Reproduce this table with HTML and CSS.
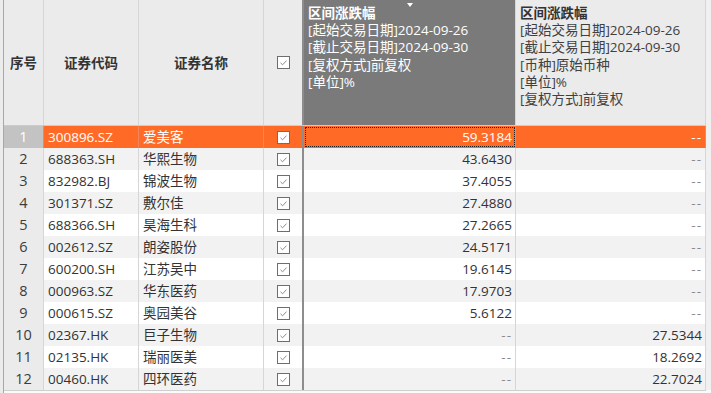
FILE: index.html
```html
<!DOCTYPE html>
<html lang="zh-CN">
<head>
<meta charset="utf-8">
<title>区间涨跌幅</title>
<link rel="stylesheet" href="styles.css">
</head>
<body>
<div class="sheet">
  <div class="gutter"></div>
  <div class="grid">
    <div class="row head">
      <div class="c h serial">序号</div>
      <div class="c h">证券代码</div>
      <div class="c h">证券名称</div>
      <div class="c h chk"><svg class="box" width="13" height="13" viewBox="0 0 13 13"><rect x="0.5" y="0.5" width="12" height="12" fill="#fff" stroke="#6e6e6e"/><path d="M3.5 6.8 L5.6 8.8 L9.5 4.6" fill="none" stroke="#8a8a8a" stroke-width="1"/></svg></div>
      <div class="c hd dark"><span class="sort"></span><b>区间涨跌幅</b><br>[起始交易日期]2024-09-26<br>[截止交易日期]2024-09-30<br>[复权方式]前复权<br>[单位]%</div>
      <div class="c hd"><b>区间涨跌幅</b><br>[起始交易日期]2024-09-26<br>[截止交易日期]2024-09-30<br>[币种]原始币种<br>[单位]%<br>[复权方式]前复权</div>
    </div>

    <div class="row sel">
      <div class="c serial">1</div><div class="c t">300896.SZ</div><div class="c t">爱美客</div>
      <div class="c chk"><svg class="box" width="13" height="13" viewBox="0 0 13 13"><rect x="0.5" y="0.5" width="12" height="12" fill="#fff" stroke="#6e6e6e"/><path d="M3.5 6.8 L5.6 8.8 L9.5 4.6" fill="none" stroke="#8a8a8a" stroke-width="1"/></svg></div>
      <div class="c n focus">59.3184</div><div class="c n na">--</div>
    </div>
    <div class="row alt">
      <div class="c serial">2</div><div class="c t">688363.SH</div><div class="c t">华熙生物</div>
      <div class="c chk"><svg class="box" width="13" height="13" viewBox="0 0 13 13"><rect x="0.5" y="0.5" width="12" height="12" fill="#fff" stroke="#6e6e6e"/><path d="M3.5 6.8 L5.6 8.8 L9.5 4.6" fill="none" stroke="#8a8a8a" stroke-width="1"/></svg></div>
      <div class="c n">43.6430</div><div class="c n na">--</div>
    </div>
    <div class="row">
      <div class="c serial">3</div><div class="c t">832982.BJ</div><div class="c t">锦波生物</div>
      <div class="c chk"><svg class="box" width="13" height="13" viewBox="0 0 13 13"><rect x="0.5" y="0.5" width="12" height="12" fill="#fff" stroke="#6e6e6e"/><path d="M3.5 6.8 L5.6 8.8 L9.5 4.6" fill="none" stroke="#8a8a8a" stroke-width="1"/></svg></div>
      <div class="c n">37.4055</div><div class="c n na">--</div>
    </div>
    <div class="row alt">
      <div class="c serial">4</div><div class="c t">301371.SZ</div><div class="c t">敷尔佳</div>
      <div class="c chk"><svg class="box" width="13" height="13" viewBox="0 0 13 13"><rect x="0.5" y="0.5" width="12" height="12" fill="#fff" stroke="#6e6e6e"/><path d="M3.5 6.8 L5.6 8.8 L9.5 4.6" fill="none" stroke="#8a8a8a" stroke-width="1"/></svg></div>
      <div class="c n">27.4880</div><div class="c n na">--</div>
    </div>
    <div class="row">
      <div class="c serial">5</div><div class="c t">688366.SH</div><div class="c t">昊海生科</div>
      <div class="c chk"><svg class="box" width="13" height="13" viewBox="0 0 13 13"><rect x="0.5" y="0.5" width="12" height="12" fill="#fff" stroke="#6e6e6e"/><path d="M3.5 6.8 L5.6 8.8 L9.5 4.6" fill="none" stroke="#8a8a8a" stroke-width="1"/></svg></div>
      <div class="c n">27.2665</div><div class="c n na">--</div>
    </div>
    <div class="row alt">
      <div class="c serial">6</div><div class="c t">002612.SZ</div><div class="c t">朗姿股份</div>
      <div class="c chk"><svg class="box" width="13" height="13" viewBox="0 0 13 13"><rect x="0.5" y="0.5" width="12" height="12" fill="#fff" stroke="#6e6e6e"/><path d="M3.5 6.8 L5.6 8.8 L9.5 4.6" fill="none" stroke="#8a8a8a" stroke-width="1"/></svg></div>
      <div class="c n">24.5171</div><div class="c n na">--</div>
    </div>
    <div class="row">
      <div class="c serial">7</div><div class="c t">600200.SH</div><div class="c t">江苏吴中</div>
      <div class="c chk"><svg class="box" width="13" height="13" viewBox="0 0 13 13"><rect x="0.5" y="0.5" width="12" height="12" fill="#fff" stroke="#6e6e6e"/><path d="M3.5 6.8 L5.6 8.8 L9.5 4.6" fill="none" stroke="#8a8a8a" stroke-width="1"/></svg></div>
      <div class="c n">19.6145</div><div class="c n na">--</div>
    </div>
    <div class="row alt">
      <div class="c serial">8</div><div class="c t">000963.SZ</div><div class="c t">华东医药</div>
      <div class="c chk"><svg class="box" width="13" height="13" viewBox="0 0 13 13"><rect x="0.5" y="0.5" width="12" height="12" fill="#fff" stroke="#6e6e6e"/><path d="M3.5 6.8 L5.6 8.8 L9.5 4.6" fill="none" stroke="#8a8a8a" stroke-width="1"/></svg></div>
      <div class="c n">17.9703</div><div class="c n na">--</div>
    </div>
    <div class="row">
      <div class="c serial">9</div><div class="c t">000615.SZ</div><div class="c t">奥园美谷</div>
      <div class="c chk"><svg class="box" width="13" height="13" viewBox="0 0 13 13"><rect x="0.5" y="0.5" width="12" height="12" fill="#fff" stroke="#6e6e6e"/><path d="M3.5 6.8 L5.6 8.8 L9.5 4.6" fill="none" stroke="#8a8a8a" stroke-width="1"/></svg></div>
      <div class="c n">5.6122</div><div class="c n na">--</div>
    </div>
    <div class="row alt">
      <div class="c serial">10</div><div class="c t">02367.HK</div><div class="c t">巨子生物</div>
      <div class="c chk"><svg class="box" width="13" height="13" viewBox="0 0 13 13"><rect x="0.5" y="0.5" width="12" height="12" fill="#fff" stroke="#6e6e6e"/><path d="M3.5 6.8 L5.6 8.8 L9.5 4.6" fill="none" stroke="#8a8a8a" stroke-width="1"/></svg></div>
      <div class="c n na">--</div><div class="c n">27.5344</div>
    </div>
    <div class="row">
      <div class="c serial">11</div><div class="c t">02135.HK</div><div class="c t">瑞丽医美</div>
      <div class="c chk"><svg class="box" width="13" height="13" viewBox="0 0 13 13"><rect x="0.5" y="0.5" width="12" height="12" fill="#fff" stroke="#6e6e6e"/><path d="M3.5 6.8 L5.6 8.8 L9.5 4.6" fill="none" stroke="#8a8a8a" stroke-width="1"/></svg></div>
      <div class="c n na">--</div><div class="c n">18.2692</div>
    </div>
    <div class="row alt last">
      <div class="c serial">12</div><div class="c t">00460.HK</div><div class="c t">四环医药</div>
      <div class="c chk"><svg class="box" width="13" height="13" viewBox="0 0 13 13"><rect x="0.5" y="0.5" width="12" height="12" fill="#fff" stroke="#6e6e6e"/><path d="M3.5 6.8 L5.6 8.8 L9.5 4.6" fill="none" stroke="#8a8a8a" stroke-width="1"/></svg></div>
      <div class="c n na">--</div><div class="c n">22.7024</div>
    </div>
  </div>
  <div class="tail"></div>
</div>
</body>
</html>
```

FILE: styles.css
```css
* { box-sizing: border-box; }
html, body { margin: 0; padding: 0; }
body {
  background: #fafafa;
  font-family: "Open Sans", "Noto Sans CJK SC", sans-serif;
  font-size: 13.5px;
  color: #333;
}
.sheet {
  display: flex;
  align-items: flex-start;
  width: 711px;
  height: 393px;
}
.gutter {
  width: 4px;
  align-self: stretch;
  background: #ececec;
  border-right: 1px solid #a8a8a8;
}
.tail {
  flex: 1;
  height: 390px;
  background: #f0f0f0;
}
.grid {
  width: 702px;
  border-bottom: 1px solid #cfcfcf;
}
.row {
  display: grid;
  grid-template-columns: 40px 95px 125px 40px 212px 190px;
  height: 22px;
  background: #ffffff;
}
.row.alt { background: #f2f2f2; }
.row.head { height: 126px; background: #ebebeb; border-bottom: 1px solid #cbcbcb; }
.c {
  border-right: 1px solid #d6d6d6;
  white-space: nowrap;
  overflow: hidden;
  line-height: 22px;
}
.c:nth-child(4) { border-right: 2px solid #8d8d8d; }
.serial {
  background: #ebebeb;
  text-align: center;
  font-size: 14.5px;
  color: #3c3c3c;
}
.t { padding-left: 4px; }
.n { text-align: right; padding-right: 3px; }
.na { color: #8a8a8a; letter-spacing: 1px; }
.chk { display: flex; align-items: center; justify-content: center; }
.box { display: block; }
.h {
  display: flex;
  align-items: center;
  justify-content: center;
  font-weight: bold;
  color: #333;
  font-size: 13.5px;
}
.head .serial { font-size: 13.5px; }
.hd {
  position: relative;
  padding: 5px 4px 0 4px;
  line-height: 17.2px;
  color: #404040;
  font-size: 13.5px;
}
.hd b { font-weight: bold; color: #333; }
.hd.dark { background: #7a7a7a; color: #fff; }
.hd.dark b { color: #fff; }
.sort {
  position: absolute;
  top: 3px;
  left: 50%;
  margin-left: -3px;
  width: 0;
  height: 0;
  border-left: 3px solid transparent;
  border-right: 3px solid transparent;
  border-top: 4px solid #fff;
}
.row.sel { background: #ff6b27; color: #fff; }
.row.sel .serial { background: #c3c3c3; color: #fff; }
.row.sel .na { color: #fff; }
.row.sel .c { border-right-color: #f0865a; }
.row.sel .c:nth-child(4) { border-right-color: #8d8d8d; }
.focus { outline: 1px dotted #222; outline-offset: -2px; }
```
